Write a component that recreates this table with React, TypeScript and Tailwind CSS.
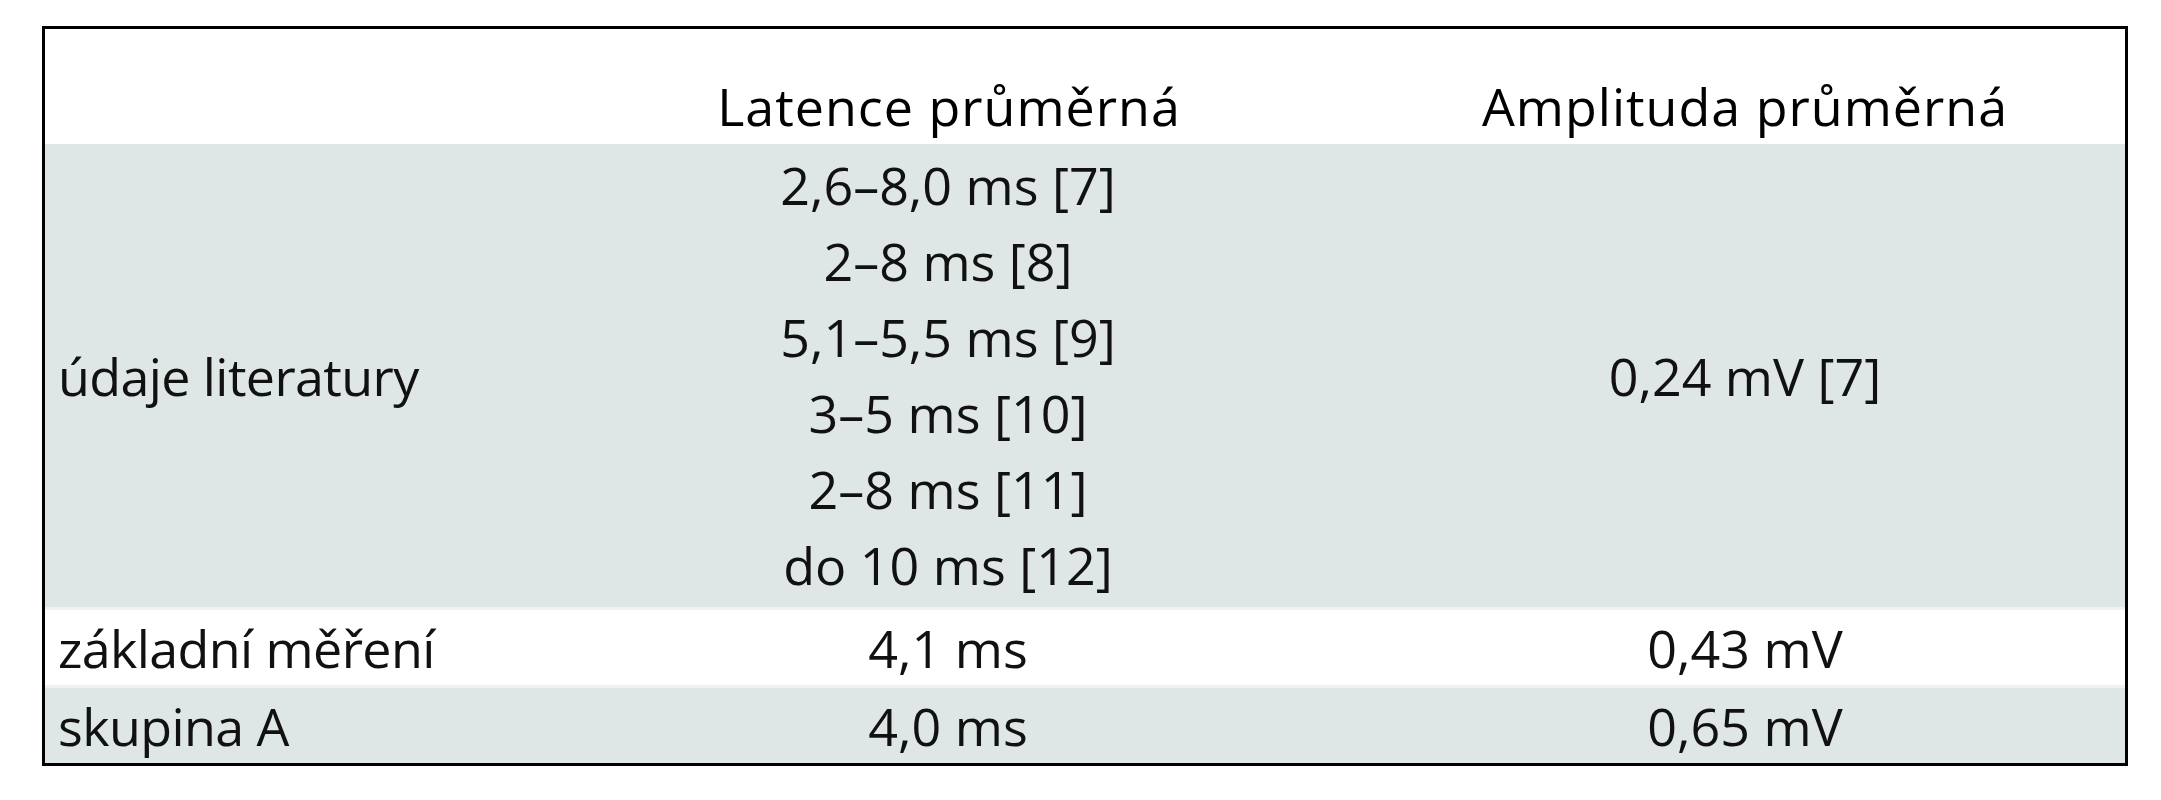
import React from "react";

const font = { fontFamily: '"Open Sans", "Noto Sans", sans-serif' };

export default function App() {
  const lit = [
    "2,6–8,0 ms [7]",
    "2–8 ms [8]",
    "5,1–5,5 ms [9]",
    "3–5 ms [10]",
    "2–8 ms [11]",
    "do 10 ms [12]",
  ];
  return (
    <div
      className="w-[2161px] h-[800px] bg-white pt-[26px] pl-[42px] text-[52px] text-[#111111]"
      style={font}
    >
      <div className="w-[2086px] border-[3px] border-black flex flex-col">
        {/* header */}
        <div className="grid grid-cols-[486px_834px_1fr] h-[115px] items-end bg-white leading-[76px] font-medium tracking-[1px] text-black">
          <div />
          <div className="text-center pl-[2px]">Latence průměrná</div>
          <div className="text-center">Amplituda průměrná</div>
        </div>
        {/* literature */}
        <div className="grid grid-cols-[486px_834px_1fr] h-[463px] bg-[#dfe7e6] leading-[76px]">
          <div className="flex items-center pl-[13px] tracking-[-0.6px]">údaje literatury</div>
          <div className="flex flex-col items-center pt-[3px]">
            {lit.map((l) => (
              <div key={l}>{l}</div>
            ))}
          </div>
          <div className="flex items-center justify-center">0,24 mV [7]</div>
        </div>
        <div className="h-[3px] bg-[#eef2f1]" />
        <div className="grid grid-cols-[486px_834px_1fr] h-[75px] bg-white leading-[75px]">
          <div className="pl-[13px] tracking-[-0.6px]">základní měření</div>
          <div className="text-center">4,1 ms</div>
          <div className="text-center">0,43 mV</div>
        </div>
        <div className="h-[3px] bg-[#eef2f1]" />
        <div className="grid grid-cols-[486px_834px_1fr] h-[75px] bg-[#dfe7e6] leading-[75px]">
          <div className="pl-[13px] tracking-[-0.6px]">skupina A</div>
          <div className="text-center">4,0 ms</div>
          <div className="text-center">0,65 mV</div>
        </div>
      </div>
    </div>
  );
}
